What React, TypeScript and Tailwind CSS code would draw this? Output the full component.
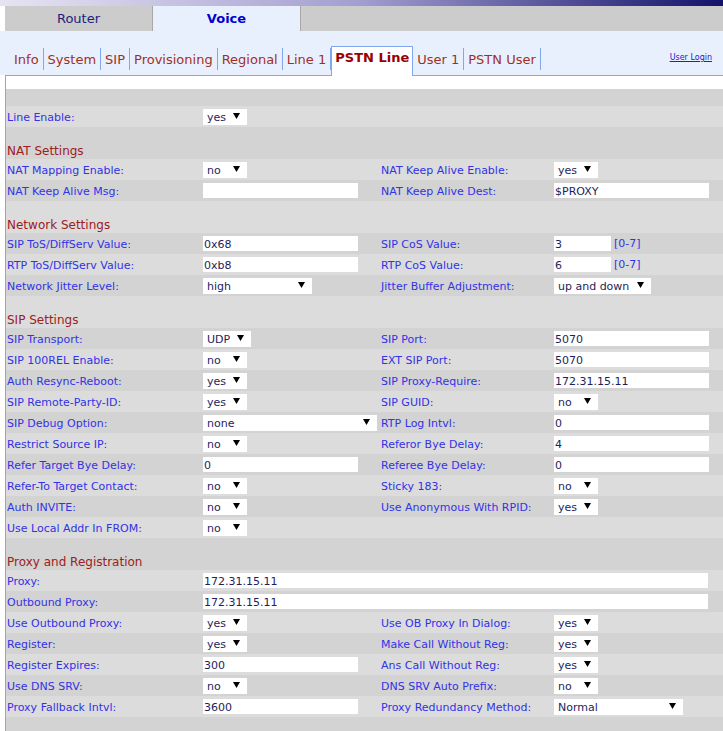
import React from 'react';

type Field =
  | { t: 'sel'; v: string; w: string }
  | { t: 'in'; v: string; w: string; note?: string };

type Spec =
  | { kind: 'blank' }
  | { kind: 'head'; text: string }
  | { kind: 'row'; a: string; b: Field; c?: string; d?: Field; wide?: boolean };

function Arrow() {
  return (
    <svg width="7" height="6" viewBox="0 0 7 6" className="shrink-0 mt-[2px]">
      <polygon points="0,0 7,0 3.5,6" fill="#000" />
    </svg>
  );
}

function Value({ f }: { f: Field }) {
  if (f.t === 'sel') {
    return (
      <div className={`${f.w} h-[16px] bg-white flex justify-between pl-[4px] pr-[7px] pt-[2px] text-[11px] leading-[14px] text-[#1e1e5a]`}>
        <span>{f.v}</span>
        <Arrow />
      </div>
    );
  }
  return (
    <div className="flex items-center">
      <div className={`${f.w} h-[15px] bg-white pl-[1px] pt-[2px] text-[11px] leading-[13px] text-[#1e1e5a]`}>{f.v}</div>
      {f.note && <span className="ml-[3px] pt-[1px] text-[11px] leading-[14px] text-[#3232e6]">{f.note}</span>}
    </div>
  );
}

const yes = (w = 'w-[44px]'): Field => ({ t: 'sel', v: 'yes', w });
const no = (w = 'w-[44px]'): Field => ({ t: 'sel', v: 'no', w });
const inp = (v: string, note?: string): Field => ({ t: 'in', v, w: note ? 'w-[57px]' : 'w-[155px]', note });

const rows: Spec[] = [
  { kind: 'blank' },
  { kind: 'row', a: 'Line Enable:', b: yes() },
  { kind: 'head', text: 'NAT Settings' },
  { kind: 'row', a: 'NAT Mapping Enable:', b: no(), c: 'NAT Keep Alive Enable:', d: yes() },
  { kind: 'row', a: 'NAT Keep Alive Msg:', b: inp(''), c: 'NAT Keep Alive Dest:', d: inp('$PROXY') },
  { kind: 'head', text: 'Network Settings' },
  { kind: 'row', a: 'SIP ToS/DiffServ Value:', b: inp('0x68'), c: 'SIP CoS Value:', d: inp('3', '[0-7]') },
  { kind: 'row', a: 'RTP ToS/DiffServ Value:', b: inp('0xb8'), c: 'RTP CoS Value:', d: inp('6', '[0-7]') },
  {
    kind: 'row',
    a: 'Network Jitter Level:',
    b: { t: 'sel', v: 'high', w: 'w-[109px]' },
    c: 'Jitter Buffer Adjustment:',
    d: { t: 'sel', v: 'up and down', w: 'w-[97px]' },
  },
  { kind: 'head', text: 'SIP Settings' },
  { kind: 'row', a: 'SIP Transport:', b: { t: 'sel', v: 'UDP', w: 'w-[48px]' }, c: 'SIP Port:', d: inp('5070') },
  { kind: 'row', a: 'SIP 100REL Enable:', b: no(), c: 'EXT SIP Port:', d: inp('5070') },
  { kind: 'row', a: 'Auth Resync-Reboot:', b: yes(), c: 'SIP Proxy-Require:', d: inp('172.31.15.11') },
  { kind: 'row', a: 'SIP Remote-Party-ID:', b: yes(), c: 'SIP GUID:', d: no() },
  { kind: 'row', a: 'SIP Debug Option:', b: { t: 'sel', v: 'none', w: 'w-[174px]' }, c: 'RTP Log Intvl:', d: inp('0') },
  { kind: 'row', a: 'Restrict Source IP:', b: no(), c: 'Referor Bye Delay:', d: inp('4') },
  { kind: 'row', a: 'Refer Target Bye Delay:', b: inp('0'), c: 'Referee Bye Delay:', d: inp('0') },
  { kind: 'row', a: 'Refer-To Target Contact:', b: no(), c: 'Sticky 183:', d: no() },
  { kind: 'row', a: 'Auth INVITE:', b: no(), c: 'Use Anonymous With RPID:', d: yes() },
  { kind: 'row', a: 'Use Local Addr In FROM:', b: no() },
  { kind: 'head', text: 'Proxy and Registration' },
  { kind: 'row', a: 'Proxy:', b: { t: 'in', v: '172.31.15.11', w: 'w-[505px]' }, wide: true },
  { kind: 'row', a: 'Outbound Proxy:', b: { t: 'in', v: '172.31.15.11', w: 'w-[505px]' }, wide: true },
  { kind: 'row', a: 'Use Outbound Proxy:', b: yes(), c: 'Use OB Proxy In Dialog:', d: yes() },
  { kind: 'row', a: 'Register:', b: yes(), c: 'Make Call Without Reg:', d: yes() },
  { kind: 'row', a: 'Register Expires:', b: inp('300'), c: 'Ans Call Without Reg:', d: yes() },
  { kind: 'row', a: 'Use DNS SRV:', b: no(), c: 'DNS SRV Auto Prefix:', d: no() },
  {
    kind: 'row',
    a: 'Proxy Fallback Intvl:',
    b: inp('3600'),
    c: 'Proxy Redundancy Method:',
    d: { t: 'sel', v: 'Normal', w: 'w-[129px]' },
  },
  { kind: 'head', text: '' },
];

const subTabs = ['Info', 'System', 'SIP', 'Provisioning', 'Regional', 'Line 1'];

export default function App() {
  return (
    <div className="w-[723px] h-[731px] overflow-hidden bg-white font-['DejaVu_Sans',sans-serif]">
      <div className="h-[6px] bg-[linear-gradient(to_right,#e6e4f2,#a29ed0_50%,#13136a)]" />

      <div className="flex h-[25px] ml-[5px] bg-[#cccccc]">
        <div className="w-[148px] flex items-center justify-center border-r border-[#a8a8a8] text-[13px] text-[#22227a]">
          Router
        </div>
        <div className="w-[148px] flex items-center justify-center border-r border-[#a8a8a8] bg-[#e8f0fd] text-[13px] font-bold text-[#0000cc]">
          Voice
        </div>
      </div>

      <div className="h-[44px] flex items-end bg-[#e8f0fd] pl-[10px] text-[13px]">
        {subTabs.map((t) => (
          <div key={t} className="h-[22px] mb-[5px] px-[4px] pt-[1px] flex items-center border-r border-[#80a8f0] text-[#a0301c]">
            {t}
          </div>
        ))}
        <div className="relative z-10 h-[30px] -mb-px px-[3px] pt-[2px] leading-[17px] bg-white border-l border-t border-r border-[#80a8f0] font-bold text-[#990000]">
          PSTN Line
        </div>
        {['User 1', 'PSTN User'].map((t) => (
          <div key={t} className="h-[22px] mb-[5px] px-[4px] pt-[1px] flex items-center border-r border-[#80a8f0] text-[#a0301c]">
            {t}
          </div>
        ))}
        <a className="ml-auto mr-[11px] mb-[12px] text-[8px] leading-[10px] underline text-[#2020cc]">User Login</a>
      </div>

      <div className="ml-[5px] border-l border-t border-[#80a8f0]">
        <div className="h-[13px] bg-white" />
        {rows.map((r, i) => {
          const bg = i % 2 ? 'bg-[#dcdcdc]' : 'bg-[#d3d3d3]';
          if (r.kind === 'blank') return <div key={i} className={`h-[17px] ${bg}`} />;
          if (r.kind === 'head')
            return (
              <div key={i} className={`h-[32px] flex items-end pl-[1px] text-[12px] leading-[15px] text-[#9c2020] ${bg}`}>
                {r.text}
              </div>
            );
          return (
            <div key={i} className={`h-[21px] grid grid-cols-[197px_178px_173px_1fr] items-center text-[11px] ${bg}`}>
              <div className="pl-[1px] pt-[2px] leading-[13px] text-[#3232e6]">{r.a}</div>
              {r.wide ? (
                <div className="col-span-3">
                  <Value f={r.b} />
                </div>
              ) : (
                <>
                  <div>
                    <Value f={r.b} />
                  </div>
                  <div className="pt-[2px] leading-[13px] text-[#3232e6]">{r.c}</div>
                  <div>{r.d && <Value f={r.d} />}</div>
                </>
              )}
            </div>
          );
        })}
      </div>
    </div>
  );
}
